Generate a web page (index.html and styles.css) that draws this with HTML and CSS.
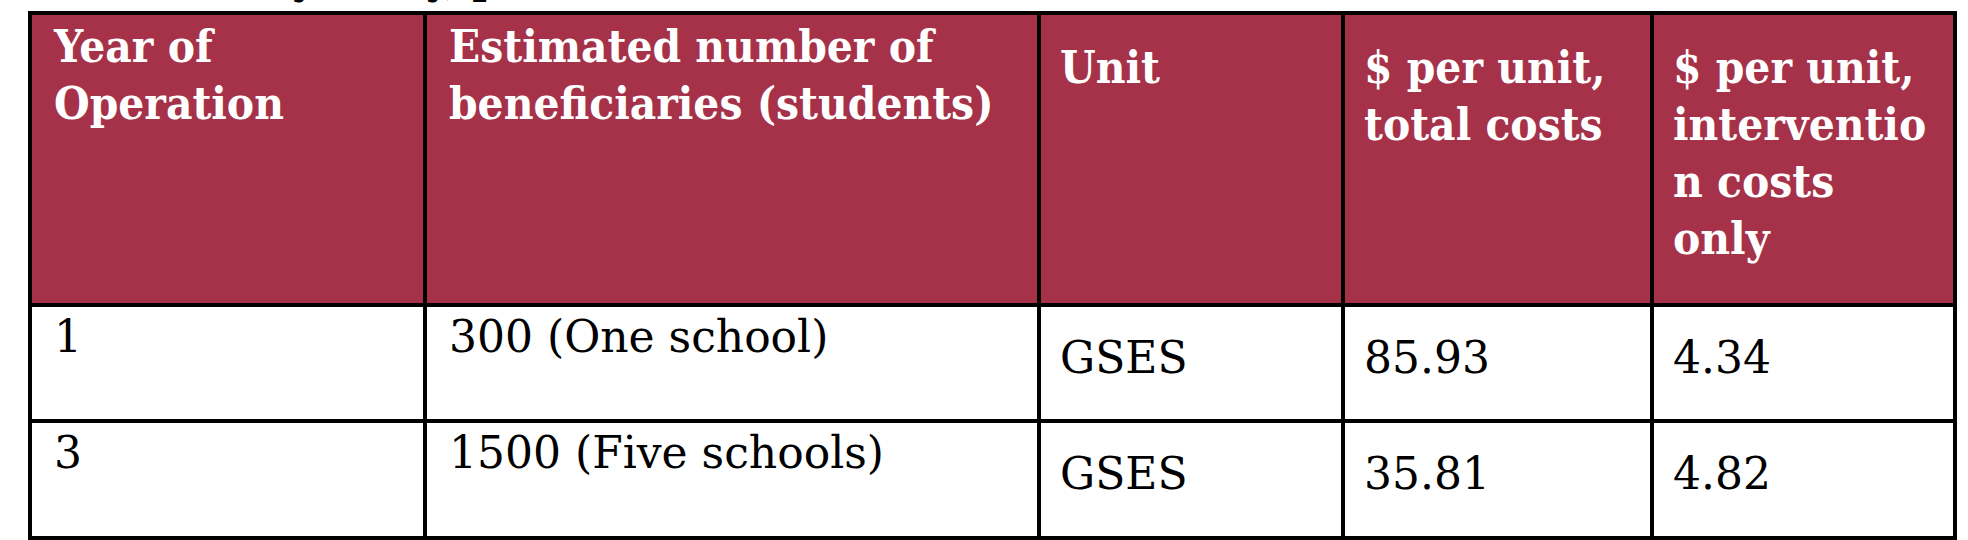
FILE: index.html
```html
<!DOCTYPE html>
<html lang="en">
<head>
<meta charset="utf-8">
<title>Cost table</title>
<link rel="stylesheet" href="styles.css">
</head>
<body>
<div class="caption"><span class="caption-text">Costs by study, per unit</span></div>
<table class="cost-table">
  <colgroup>
    <col class="c1"><col class="c2"><col class="c3"><col class="c4"><col class="c5">
  </colgroup>
  <thead>
    <tr class="head-row">
      <th class="cell">Year of<br>Operation</th>
      <th class="cell">Estimated number of<br>beneficiaries (students)</th>
      <th class="cell cell-low">Unit</th>
      <th class="cell cell-low">$ per unit,<br>total costs</th>
      <th class="cell cell-low">$ per unit,<br>interventio<br>n costs<br>only</th>
    </tr>
  </thead>
  <tbody>
    <tr class="row-a">
      <td class="cell">1</td>
      <td class="cell">300 (One school)</td>
      <td class="cell cell-low">GSES</td>
      <td class="cell cell-low">85.93</td>
      <td class="cell cell-low">4.34</td>
    </tr>
    <tr class="row-b">
      <td class="cell">3</td>
      <td class="cell">1500 (Five schools)</td>
      <td class="cell cell-low">GSES</td>
      <td class="cell cell-low">35.81</td>
      <td class="cell cell-low">4.82</td>
    </tr>
  </tbody>
</table>
</body>
</html>
```
FILE: styles.css
```css
html, body {
  margin: 0;
  padding: 0;
  background: #ffffff;
}
body {
  font-family: "DejaVu Serif", "Liberation Serif", serif;
  color: #000000;
}
.caption {
  height: 11px;
  overflow: hidden;
  padding-left: 130px;
}
.caption-text {
  display: block;
  font-size: 44px;
  font-weight: bold;
  font-stretch: semi-condensed;
  line-height: 44px;
  margin-top: -44px;
  white-space: nowrap;
}
.cost-table {
  margin-left: 28px;
  border-collapse: separate;
  border-spacing: 0;
  table-layout: fixed;
  width: 1929px;
  border-left: 4px solid #000;
  border-top: 4px solid #000;
}
.c1 { width: 395px; }
.c2 { width: 614px; }
.c3 { width: 304px; }
.c4 { width: 309px; }
.c5 { width: 303px; }
.cell {
  box-sizing: border-box;
  border-right: 4px solid #000;
  border-bottom: 4px solid #000;
  vertical-align: top;
  text-align: left;
  font-size: 44px;
  line-height: 57px;
  white-space: nowrap;
  overflow: hidden;
  padding: 1px 0 0 22px;
}
.head-row { height: 292px; }
.row-a { height: 116px; }
.row-b { height: 117px; }
.head-row .cell {
  background: #a53249;
  color: #ffffff;
  font-weight: bold;
  font-stretch: semi-condensed;
  font-size: 45.5px;
  padding-top: 3px;
}
.head-row .cell-low { padding-top: 24px; padding-left: 19px; }
tbody .cell { font-weight: normal; }
tbody .cell-low { padding-top: 22px; padding-left: 19px; }
```
